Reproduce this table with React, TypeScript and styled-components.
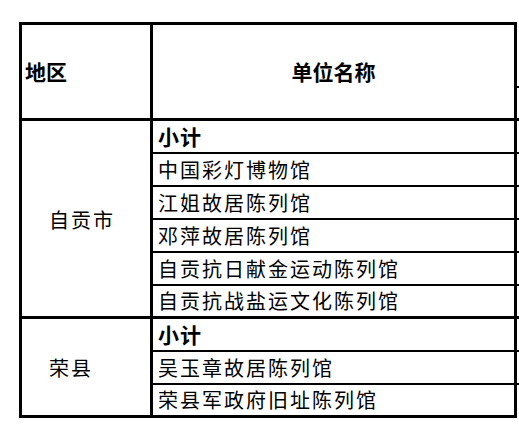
import React from 'react';
import styled, { createGlobalStyle } from 'styled-components';

const GlobalStyle = createGlobalStyle`
  html, body {
    margin: 0;
    padding: 0;
    background: #fff;
    overflow: hidden;
  }
  body {
    font-family: "Noto Sans CJK SC", "Noto Sans", sans-serif;
    color: #000;
  }
`;

const Page = styled.div`
  padding: 22px 0 0 19px;
  width: 519px;
  height: 439px;
  box-sizing: border-box;
`;

// third column runs past the right edge of the window, as in the sheet
const Sheet = styled.div`
  display: grid;
  width: max-content;
  grid-template-columns: 131px 364px 220px;
  grid-template-rows: 66px 33px repeat(9, 33px);
  border-left: 3px solid #000;
`;

const Cell = styled.div<{ $span?: number; $thick?: boolean; $top?: boolean; $open?: boolean; $align?: 'left' | 'center' }>`
  box-sizing: border-box;
  grid-row: ${(p) => (p.$span ? `span ${p.$span}` : 'auto')};
  border-top: ${(p) => (p.$top ? '3px solid #000' : 'none')};
  border-right: 3px solid #000;
  border-bottom: ${(p) => (p.$open ? 'none' : `${p.$thick ? 3 : 2}px solid #000`)};
  display: flex;
  align-items: center;
  justify-content: ${(p) => (p.$align === 'center' ? 'center' : 'flex-start')};
  white-space: nowrap;
  overflow: hidden;
`;

const HeadText = styled.span<{ $pad?: number }>`
  font-size: 21px;
  font-weight: 700;
  padding-left: ${(p) => p.$pad ?? 0}px;
  line-height: 1;
`;

const RegionText = styled.span`
  font-size: 20px;
  letter-spacing: 2px;
  padding-left: 27px;
  line-height: 1;
  margin-top: 2px;
`;

const NameText = styled.span<{ $bold?: boolean }>`
  font-size: ${(p) => (p.$bold ? 21 : 20)}px;
  font-weight: ${(p) => (p.$bold ? 700 : 400)};
  letter-spacing: ${(p) => (p.$bold ? 1 : 2)}px;
  padding-left: 5px;
  line-height: 1;
`;

interface Group {
  region: string;
  units: string[];
}

const groups: Group[] = [
  {
    region: '自贡市',
    units: ['中国彩灯博物馆', '江姐故居陈列馆', '邓萍故居陈列馆', '自贡抗日献金运动陈列馆', '自贡抗战盐运文化陈列馆']
  },
  {
    region: '荣县',
    units: ['吴玉章故居陈列馆', '荣县军政府旧址陈列馆']
  }
];

const App = () => (
  <>
    <GlobalStyle />
    <Page>
      <Sheet>
        <Cell $span={2} $thick $top>
          <HeadText $pad={3}>地区</HeadText>
        </Cell>
        <Cell $span={2} $thick $top $align="center">
          <HeadText>单位名称</HeadText>
        </Cell>
        <Cell />
        <Cell $thick />

        {groups.map((g, gi) => {
          const rows = ['小计', ...g.units];
          const lastGroup = gi === groups.length - 1;
          return (
            <React.Fragment key={g.region}>
              <Cell $span={rows.length} $thick>
                <RegionText>{g.region}</RegionText>
              </Cell>
              {rows.map((name, i) => {
                const last = i === rows.length - 1;
                return (
                  <React.Fragment key={name}>
                    <Cell $thick={last}>
                      <NameText $bold={i === 0}>{name}</NameText>
                    </Cell>
                    <Cell $thick={last} $open={last && lastGroup} />
                  </React.Fragment>
                );
              })}
            </React.Fragment>
          );
        })}
      </Sheet>
    </Page>
  </>
);

export default App;
